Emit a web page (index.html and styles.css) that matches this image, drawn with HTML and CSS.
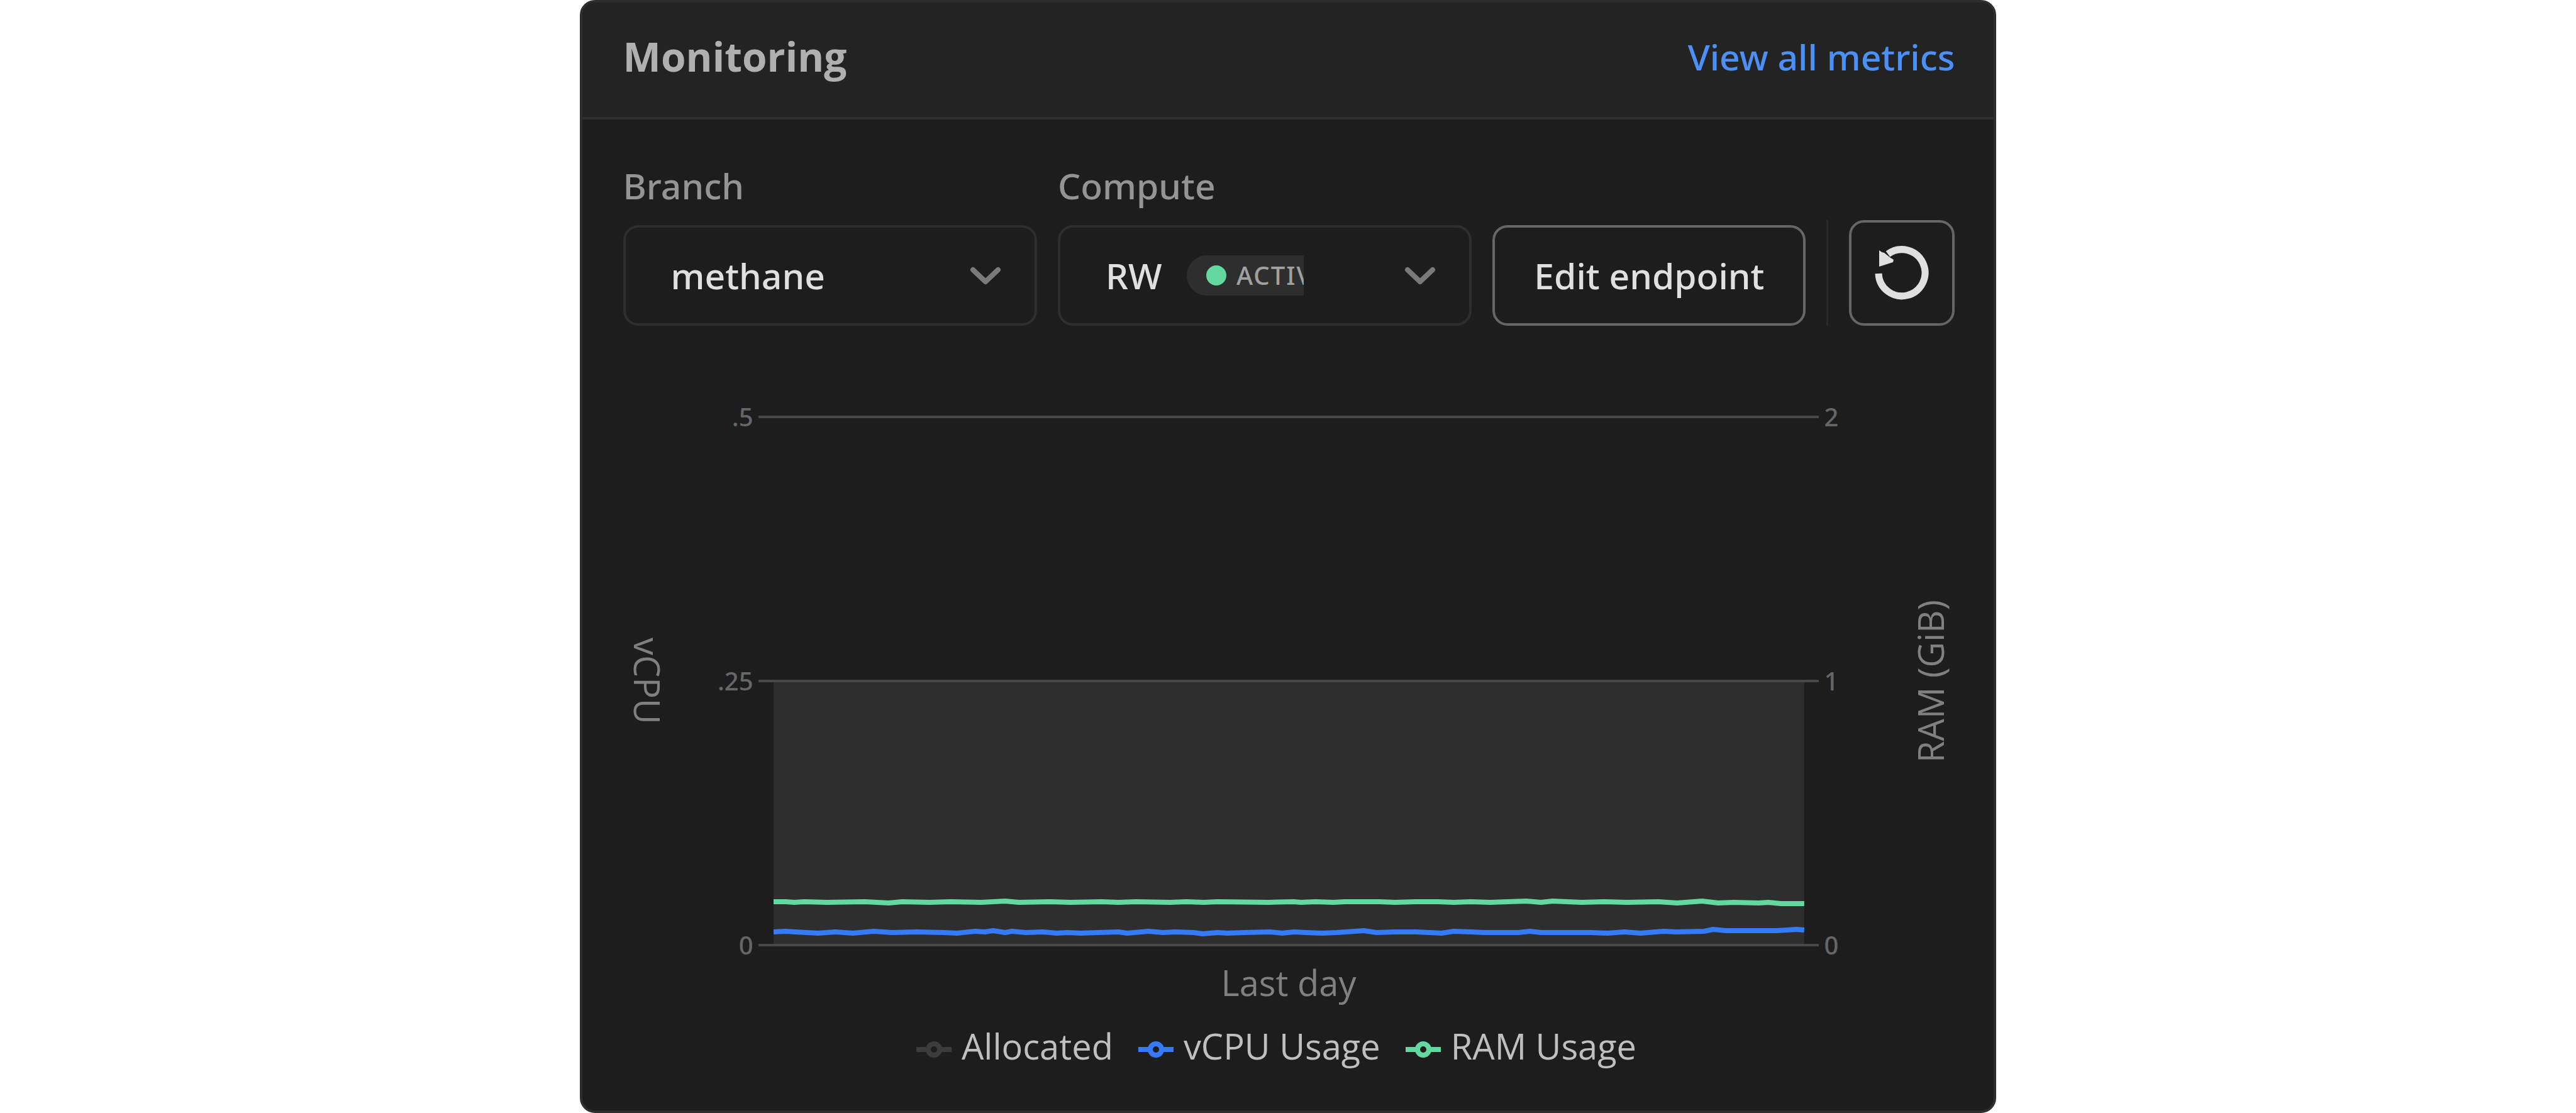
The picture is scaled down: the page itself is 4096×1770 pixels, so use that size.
FILE: index.html
```html
<!DOCTYPE html>
<html lang="en">
<head>
<meta charset="utf-8">
<title>Monitoring</title>
<link rel="stylesheet" href="styles.css">
</head>
<body>
<main class="card">
  <header class="card-header">
    <h1 class="card-title">Monitoring</h1>
    <a class="card-link" href="#metrics">View all metrics</a>
  </header>
  <div class="card-body">
    <form class="controls">
      <div class="field">
        <label class="field-label" for="branch">Branch</label>
        <div class="select-wrap">
          <select class="select" id="branch"><option>methane</option></select>
          <svg class="chevron" viewBox="0 0 50 30" aria-hidden="true"><path d="M5 5 25 24 45 5"/></svg>
        </div>
      </div>
      <div class="field">
        <label class="field-label" for="compute">Compute</label>
        <div class="select-wrap">
          <select class="select" id="compute"><option>RW</option></select>
          <span class="badge-clip"><span class="badge"><span class="badge-dot"></span>ACTIVE</span></span>
          <svg class="chevron" viewBox="0 0 50 30" aria-hidden="true"><path d="M5 5 25 24 45 5"/></svg>
        </div>
      </div>
      <button class="button" type="button">Edit endpoint</button>
      <span class="divider"></span>
      <button class="button button-icon" type="button" aria-label="Refresh">
        <svg class="refresh" viewBox="0 0 88 88" aria-hidden="true">
          <path class="refresh-arc" d="M7 45A37 37 0 1 0 22 14"/>
          <path class="refresh-head" d="M8 8Q11 11 16 12L26 20 31 23 30 27 8 34Z"/>
        </svg>
      </button>
    </form>

    <figure class="chart">
      <span class="axis-title">vCPU</span>
      <div class="ticks ticks-left"><span>.5</span><span>.25</span><span>0</span></div>
      <svg class="plot" viewBox="0 0 1686 844" preserveAspectRatio="none" role="img" aria-label="vCPU and RAM usage over the last day">
        <rect class="allocated" x="24" y="422" width="1638" height="420"/>
        <path class="grid-line" d="M0 2H1686M0 422H1686M0 842H1686"/>
        <polyline class="line-ram" points="24,773 43,773 57,774 73,773 109,774 169,773 207,775 229,773 272,774 305,773 354,774 392,772 414,774 463,773 496,774 545,773 572,774 600,773 654,774 680,773 708,774 730,773 810,774 851,773 862,774 885,773 914,774 932,773 986,773 1012,774 1045,773 1080,773 1105,774 1132,773 1163,774 1220,772 1244,774 1262,772 1308,774 1345,773 1380,774 1430,773 1460,775 1500,772 1525,775 1550,774 1590,775 1605,774 1625,776 1662,776"/>
        <polyline class="line-cpu" points="24,821 43,820 76,822 95,823 122,821 150,823 183,820 212,822 251,821 294,822 316,823 344,820 360,821 373,819 392,822 403,820 425,822 452,821 474,823 491,822 512,823 540,822 572,821 586,823 620,820 643,822 662,821 692,822 706,824 730,822 745,823 772,822 813,821 832,823 851,821 870,822 895,823 919,822 962,819 982,822 1012,821 1045,821 1086,823 1105,820 1132,821 1154,822 1208,822 1226,820 1244,822 1323,822 1350,823 1376,821 1402,823 1438,820 1459,821 1503,820 1517,817 1538,819 1618,819 1650,817 1662,818"/>
      </svg>
      <div class="ticks"><span>2</span><span>1</span><span>0</span></div>
      <span class="axis-title axis-title-up">RAM (GiB)</span>
      <figcaption class="period">Last day</figcaption>
    </figure>

    <ul class="legend">
      <li class="legend-item legend-allocated"><svg class="legend-icon" viewBox="0 0 56 28" aria-hidden="true"><path d="M0 14H19M37 14H56"/><circle cx="28" cy="14" r="9"/></svg><span>Allocated</span></li>
      <li class="legend-item legend-cpu"><svg class="legend-icon" viewBox="0 0 56 28" aria-hidden="true"><path d="M0 14H19M37 14H56"/><circle cx="28" cy="14" r="9"/></svg><span>vCPU Usage</span></li>
      <li class="legend-item legend-ram"><svg class="legend-icon" viewBox="0 0 56 28" aria-hidden="true"><path d="M0 14H19M37 14H56"/><circle cx="28" cy="14" r="9"/></svg><span>RAM Usage</span></li>
    </ul>
  </div>
</main>
</body>
</html>
```
FILE: styles.css
```css
* { box-sizing: border-box; }

body {
  margin: 0;
  background: #fff;
  color: #e0e0e0;
  font: 500 57px/78px "Noto Sans", "Open Sans", sans-serif;
}

.card {
  width: 55%;
  min-height: 100vh;
  margin: 0 auto;
  border: 4px solid #2e2e2e;
  border-radius: 24px;
  background: #1d1d1d;
  overflow: hidden;
}

.card-header {
  display: flex;
  align-items: center;
  justify-content: space-between;
  height: 186px;
  padding: 0 62px 10px 65px;
  border-bottom: 4px solid #2e2e2e;
  background: #232323;
}

.card-title {
  margin: 0;
  color: #b0b0b0;
  font-family: "Open Sans", "Noto Sans", sans-serif;
  font-size: 64px;
  font-weight: 700;
}

.card-link {
  color: #4b90f8;
  text-decoration: none;
}

.card-body { padding: 66px 62px 0 65px; }

.controls {
  display: flex;
  align-items: flex-end;
  gap: 33px;
}

.field { flex: 1; min-width: 0; }

.field-label {
  display: block;
  margin-bottom: 24px;
  color: #949494;
}

.select-wrap { position: relative; }

.select {
  display: block;
  appearance: none;
  width: 100%;
  height: 160px;
  padding: 0 72px;
  border: 4px solid #2e2e2e;
  border-radius: 24px;
  background: transparent;
  color: #e0e0e0;
  font: inherit;
}

.chevron {
  position: absolute;
  top: 66px;
  right: 57px;
  width: 50px;
  height: 30px;
  fill: none;
  stroke: #7a7a7a;
  stroke-width: 8;
  stroke-linecap: round;
  stroke-linejoin: round;
  pointer-events: none;
}

.badge-clip {
  position: absolute;
  top: 48px;
  left: 205px;
  width: 186px;
  overflow: hidden;
  pointer-events: none;
}

.badge {
  display: flex;
  align-items: center;
  gap: 16px;
  width: 260px;
  height: 64px;
  padding-left: 31px;
  border-radius: 32px;
  background: #2e2e2e;
  color: #a0a0a0;
  font-size: 40px;
  letter-spacing: 2px;
}

.badge-dot {
  width: 32px;
  height: 32px;
  border-radius: 50%;
  background: #63d9a0;
}

.button {
  height: 160px;
  padding: 0 62px;
  border: 4px solid #666;
  border-radius: 24px;
  background: transparent;
  color: #e0e0e0;
  font: inherit;
  white-space: nowrap;
}

.button-icon {
  display: grid;
  place-items: center;
  width: 168px;
  height: 168px;
  padding: 0;
}

.refresh { width: 88px; height: 88px; }
.refresh-arc { fill: none; stroke: #e0e0e0; stroke-width: 11; }
.refresh-head { fill: #e0e0e0; }

.divider {
  width: 3px;
  height: 168px;
  background: #292929;
}

.chart {
  display: grid;
  grid-template-columns: 78px 137px 1fr 138px 78px;
  align-items: center;
  margin: 117px 0 0;
}

.axis-title,
.period,
.legend {
  font-family: "Open Sans", "Noto Sans", sans-serif;
  font-size: 56px;
  font-weight: 400;
}

.axis-title {
  justify-self: center;
  color: #808080;
  writing-mode: vertical-rl;
}

.axis-title-up { transform: rotate(180deg); }

.ticks {
  display: flex;
  flex-direction: column;
  justify-content: space-between;
  height: 896px;
  padding: 0 8px;
  color: #666;
  font-size: 40px;
  line-height: 56px;
}

.ticks-left { text-align: right; }

.plot {
  display: block;
  width: 100%;
  height: 844px;
}

.allocated { fill: #2e2e2e; }
.grid-line { stroke: #484848; stroke-width: 4; }
.line-ram, .line-cpu { fill: none; stroke-width: 8; stroke-linejoin: round; }
.line-ram { stroke: #63d9a0; }
.line-cpu { stroke: #357af6; }

.period {
  grid-column: 3;
  color: #808080;
  line-height: 62px;
  text-align: center;
}

.legend {
  display: flex;
  justify-content: center;
  margin: 40px 0 0;
  padding: 0;
  line-height: 60px;
  list-style: none;
}

.legend-item {
  display: flex;
  align-items: center;
  gap: 16px;
  margin-right: 40px;
}

.legend-icon {
  width: 56px;
  height: 28px;
  margin-top: 12px;
  fill: none;
  stroke: currentColor;
  stroke-width: 8;
}

.legend-item span { color: #bfbfbf; }
.legend-allocated { color: #3c3c3c; }
.legend-cpu { color: #357af6; }
.legend-ram { color: #63d9a0; }
```
